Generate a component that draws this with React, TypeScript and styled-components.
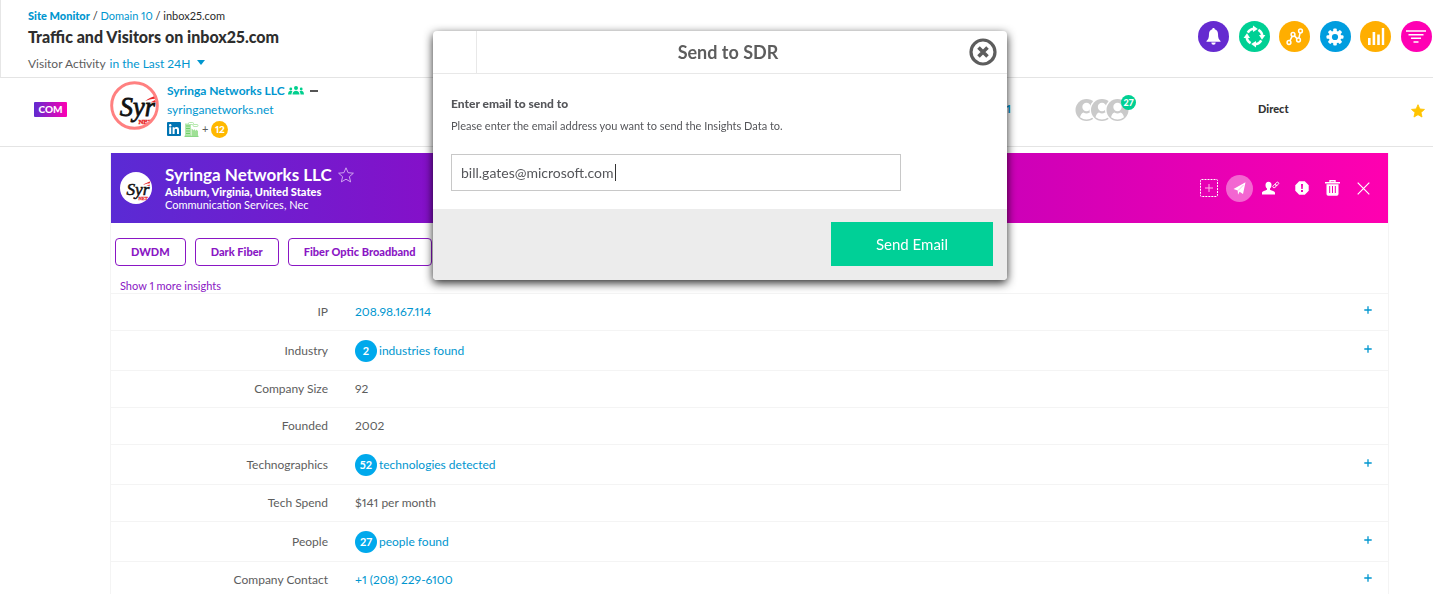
import React, { useState } from "react";
import styled, { createGlobalStyle } from "styled-components";

const blue = "#0096cf";
const grey = "#5d5d5d";
const purple = "#8a16c4";

const GlobalStyle = createGlobalStyle`
  *, *::before, *::after { box-sizing: border-box; }
  body {
    margin: 0;
    background: #fff;
    color: ${grey};
    font: 12px/16px Lato, "Open Sans", sans-serif;
    font-variant-numeric: proportional-nums;
  }
  a { color: ${blue}; text-decoration: none; }
  button { font: inherit; font-variant-numeric: inherit; cursor: pointer; }
  h1, h2, h3, p { margin: 0; }
  svg { display: block; flex: none; }
`;

const Page = styled.div`
  height: 100vh;
  overflow: hidden;
`;

/* ---------- page header ---------- */

const Header = styled.header`
  display: flex;
  justify-content: space-between;
  height: 78px;
  padding: 8px 1px 0 27px;
  border-left: 1px solid #e6e6e6;
  border-bottom: 1px solid #e4e4e4;
`;

const Crumbs = styled.nav`
  color: #2b2b2b;
  font-size: 11px;
`;

const SectionLink = styled.a`
  font-weight: 900;
`;

const Title = styled.h1`
  margin-top: 3px;
  color: #2e2e2e;
  font-size: 16px;
  font-weight: 900;
  line-height: 20px;
`;

const Activity = styled.div`
  display: flex;
  align-items: center;
  gap: 4px;
  margin-top: 9px;
  font-size: 12px;
`;

const PeriodButton = styled.button`
  display: flex;
  align-items: center;
  gap: 7px;
  padding: 0;
  border: 0;
  background: none;
  color: ${blue};
`;

const Toolbar = styled.div`
  display: flex;
  justify-content: space-between;
  width: 234px;
  margin-top: 13px;
`;

const RoundButton = styled.button<{ $color: string }>`
  display: grid;
  place-items: center;
  width: 31px;
  height: 31px;
  padding: 0;
  border: 0;
  border-radius: 50%;
  background: ${(p) => p.$color};
`;

/* ---------- visitor row ---------- */

const VisitorRow = styled.section`
  display: grid;
  grid-template-columns: 110px 1fr 69px 183px 152px 23px;
  height: 69px;
  border-bottom: 1px solid #e4e4e4;
`;

const Cell = styled.div`
  padding-top: 23px;
`;

const TypeBadge = styled.span`
  display: block;
  width: 33px;
  height: 15px;
  margin: 1px 0 0 34px;
  background: linear-gradient(90deg, #5f2bd0, #ff00b3);
  border-radius: 1px;
  color: #fff;
  font-size: 10px;
  font-weight: 900;
  line-height: 15px;
  text-align: center;
`;

const Company = styled.div`
  display: flex;
  gap: 8px;
  padding-top: 3px;
`;

const CompanyLine = styled.div`
  display: flex;
  align-items: center;
  gap: 3px;
  height: 18px;
  margin-top: 1px;
`;

const Count = styled.span`
  display: grid;
  place-items: center;
  width: 17px;
  height: 17px;
  border-radius: 50%;
  background: #ffb800;
  color: #fff;
  font-size: 10px;
  font-weight: 900;
`;

const Plus = styled.span`
  font-size: 11px;
`;

const People = styled.div`
  position: relative;
  width: 55px;
  margin-top: -3px;
`;

const PeopleCount = styled.span`
  position: absolute;
  top: -3px;
  right: -6px;
  width: 15px;
  height: 15px;
  border-radius: 50%;
  background: #00d093;
  color: #fff;
  font-size: 9px;
  font-weight: 900;
  line-height: 15px;
  text-align: center;
`;

const Source = styled.strong`
  color: #333;
  font-size: 11px;
  font-weight: 900;
`;

const IconButton = styled.button<{ $filled?: boolean }>`
  display: grid;
  place-items: center;
  width: 27px;
  height: 27px;
  padding: 0;
  border: 0;
  border-radius: 50%;
  background: ${(p) => (p.$filled ? "rgba(255,255,255,.4)" : "none")};
  color: #fff;
`;

const StarButton = styled(IconButton)`
  width: 15px;
  height: 20px;
`;

/* ---------- details panel ---------- */

const Panel = styled.section`
  margin: 6px 44px 0 110px;
  border: solid #f4f4f4;
  border-width: 0 1px;
`;

const PanelHead = styled.header`
  display: flex;
  align-items: center;
  height: 70px;
  padding: 0 11px 0 9px;
  background: linear-gradient(90deg, #5a2bd4, #8510c9 25%, #cc00b8 70%, #ff00b0);
  color: #fff;
`;

const PanelText = styled.div`
  flex: 1;
  margin-left: 13px;
  font-size: 11px;
  line-height: 13px;
`;

const PanelName = styled.h2`
  display: flex;
  align-items: center;
  gap: 6px;
  font-size: 17px;
  line-height: 20px;
`;

const Place = styled.p`
  font-weight: 900;
`;

const Actions = styled.div`
  display: flex;
  gap: 4px;
`;

const Tags = styled.div`
  display: flex;
  gap: 9px;
  padding: 15px 4px 0;
`;

const Tag = styled.button`
  height: 28px;
  padding: 0 15px;
  border: 1px solid ${purple};
  border-radius: 4px;
  background: #fff;
  color: ${purple};
  font-size: 11px;
  font-weight: 900;
`;

const MoreButton = styled.button`
  display: block;
  height: 27px;
  padding: 13px 9px 0;
  border: 0;
  background: none;
  color: ${purple};
  font-size: 11px;
  line-height: 14px;
`;

const Facts = styled.table`
  width: 100%;
  border-collapse: collapse;
  table-layout: fixed;
`;

const FactRow = styled.tr<{ $tall?: boolean }>`
  height: ${(p) => (p.$tall ? 40 : 37)}px;
  border-top: 1px solid #f4f4f4;
`;

const FactLabel = styled.th`
  width: 217px;
  padding: 0;
  font-weight: 400;
  text-align: right;
`;

const FactValue = styled.td`
  padding: 0 0 0 27px;
`;

const FactMore = styled.td`
  width: 28px;
  padding: 0 0 4px;
`;

const FoundLink = styled.a`
  display: inline-flex;
  align-items: center;
  gap: 2px;
`;

const FoundCount = styled.span`
  display: grid;
  place-items: center;
  width: 22px;
  height: 22px;
  border-radius: 50%;
  background: #00a9ec;
  color: #fff;
  font-size: 11px;
  font-weight: 700;
`;

const ExpandButton = styled.button`
  display: block;
  padding: 4px;
  border: 0;
  background: none;
  color: ${blue};
`;

/* ---------- dialog ---------- */

const Overlay = styled.div`
  position: fixed;
  inset: 0;
  display: flex;
  align-items: flex-start;
  justify-content: center;
  padding: 31px 0 0 7px;
`;

const Dialog = styled.form`
  width: 574px;
  border-radius: 4px;
  overflow: hidden;
  background: #fff;
  box-shadow: 0 3px 10px rgba(0, 0, 0, 0.85);
`;

const DialogHead = styled.header`
  display: grid;
  grid-template-columns: 44px 1fr 38px;
  align-items: center;
  height: 43px;
  border-bottom: 1px solid #e8e8e8;
`;

const HeadSlot = styled.span`
  height: 42px;
  border-right: 1px solid #e8e8e8;
`;

const DialogTitle = styled.h2`
  padding-left: 10px;
  font-size: 18px;
  line-height: 24px;
  text-align: center;
`;

const CloseButton = styled.button`
  padding: 0;
  border: 0;
  background: none;
  color: ${grey};
`;

const DialogBody = styled.div`
  padding: 22px 18px 18px;
`;

const FieldLabel = styled.label`
  display: block;
  font-size: 12px;
  font-weight: 900;
  color: #55565a;
`;

const Hint = styled.p`
  margin-top: 7px;
  color: #55565a;
  font-size: 11px;
  line-height: 14px;
`;

const Field = styled.div`
  position: relative;
  width: 450px;
  margin-top: 21px;
`;

const EmailInput = styled.input`
  width: 100%;
  height: 37px;
  padding: 0 9px;
  border: 1px solid #c8c8c8;
  outline: 0;
  background: #fff;
  color: #55565a;
  font: 14px Lato, "Open Sans", sans-serif;
`;

const Caret = styled.span`
  position: absolute;
  top: 10px;
  left: 164px;
  width: 1px;
  height: 17px;
  background: #333;
`;

const DialogFoot = styled.footer`
  display: flex;
  justify-content: flex-end;
  padding: 13px 14px 14px;
  background: #ececec;
`;

const SendButton = styled.button`
  width: 162px;
  height: 44px;
  border: 0;
  background: #00d097;
  color: #fff;
  font-size: 15px;
`;

/* ---------- drawings ---------- */

const SyringaLogo = ({ size, ring }: { size: number; ring?: boolean }) => (
  <svg width={size} height={size} viewBox="0 0 50 50" role="img" aria-label="Syringa Networks logo">
    <clipPath id={`logo${size}`}><circle cx="25" cy="25" r={ring ? 23 : 25} /></clipPath>
    <circle cx="25" cy="25" r={ring ? 23 : 25} fill="#fff" />
    <g clipPath={`url(#logo${size})`}>
      <text x="10" y="36" fontFamily="Liberation Serif, serif" fontStyle="italic" fontSize="27" fill="#111" stroke="#111" strokeWidth=".8">Syr</text>
      <path d="M36 20.500c3-3 7-4 12-6l-2 3.500c-4 0-7 1-10 2.500zM41 22l5-2.500 1 2z" fill="#e8282b" />
      <text x="29" y="44" fontFamily="Liberation Serif, serif" fontWeight="700" fontSize="7" fill="#e8282b" stroke="#e8282b" strokeWidth=".4">NET</text>
    </g>
    {ring && <circle cx="25" cy="25" r="23.3" fill="none" stroke="#ff8080" strokeWidth="3" />}
  </svg>
);

const BellIcon = () => (
  <svg width="15" height="17" viewBox="0 0 15 17" fill="#fff">
    <path d="M7.500 0c.8 0 1.200.5 1.200 1.200C11 1.800 12 3.800 12 6c0 4 .8 5.500 2.500 7v.8H.5V13C2.200 11.500 3 10 3 6c0-2.200 1-4.200 3.300-4.800C6.300.5 6.700 0 7.500 0zM5.300 14.600h4.400a2.200 2.200 0 0 1-4.400 0z" />
  </svg>
);

const CycleIcon = () => (
  <svg width="23" height="23" viewBox="0 0 23 23">
    <g fill="none" stroke="#fff" strokeWidth="2.600">
      {[0, 90, 180, 270].map((a) => (
        <path key={a} d="M4.800 7.600A7.800 7.800 0 0 1 11.500 3.700" transform={`rotate(${a} 11.500 11.500)`} />
      ))}
    </g>
    {[0, 90, 180, 270].map((a) => (
      <path key={a} d="M10 .6 14.800 4 10 7z" fill="#fff" transform={`rotate(${a} 11.500 11.500)`} />
    ))}
  </svg>
);

const NodesIcon = () => (
  <svg width="18" height="18" viewBox="0 0 18 18" fill="none" stroke="#fff" strokeWidth="1.500">
    <circle cx="3" cy="14.500" r="1.900" /><circle cx="7" cy="6.500" r="1.900" />
    <circle cx="12.500" cy="12" r="1.900" /><circle cx="14.500" cy="3" r="1.900" />
    <path d="m3.900 12.800 2.200-4.500M8.400 7.900l2.700 2.700M12.900 10.100l1.200-5.200" />
  </svg>
);

const GearIcon = () => (
  <svg width="18" height="18" viewBox="0 0 18 18">
    {[0, 45, 90, 135].map((a) => (
      <rect key={a} x="7.200" y=".5" width="3.600" height="17" rx="1" fill="#fff" transform={`rotate(${a} 9 9)`} />
    ))}
    <circle cx="9" cy="9" r="6.300" fill="#fff" />
    <circle cx="9" cy="9" r="3.100" fill="#009ddf" />
  </svg>
);

const BarsIcon = () => (
  <svg width="18" height="17" viewBox="0 0 18 17" fill="#fff">
    <path d="M1 10h2.600v7H1zM5.600 4h2.600v13H5.600zM10.200 6.500h2.600V17h-2.600zM14.800 0h2.400v17h-2.400z" />
  </svg>
);

const FilterIcon = () => (
  <svg width="20" height="13" viewBox="0 0 20 13" stroke="#fff" strokeWidth="1.400">
    <path d="M0 1h20M2.500 4.700h15M5 8.300h10M7.500 12h5" />
  </svg>
);

const GroupIcon = () => (
  <svg width="16" height="10" viewBox="0 0 16 10" fill="#00cf8e">
    <circle cx="8" cy="2" r="2" /><circle cx="2.800" cy="3" r="1.400" /><circle cx="13.200" cy="3" r="1.400" />
    <path d="M4.500 8.500c0-5 7-5 7 0zM0 8.500C0 4 3.500 4.300 4.500 5.200 3.800 6.200 3.500 7 3.500 8.500zM16 8.500c0-4.500-3.500-4.200-4.500-3.300.7 1 1 1.800 1 3.300z" />
  </svg>
);

const LinkedInIcon = () => (
  <svg width="14" height="14" viewBox="0 0 14 14">
    <rect width="14" height="14" rx="1" fill="#0073b2" />
    <path d="M2.200 5.300h2V12h-2zM5.600 5.300h1.900v.9c.4-.7 1.200-1.100 2.100-1.100 1.900 0 2.400 1.200 2.400 3V12h-2V8.500c0-.9-.1-1.700-1.100-1.700S7.600 7.600 7.600 8.500V12h-2z" fill="#fff" />
    <circle cx="3.200" cy="3.200" r="1.200" fill="#fff" />
  </svg>
);

const OfficeIcon = () => (
  <svg width="15" height="15" viewBox="0 0 15 15">
    <path d="M1 1.500h6V14H1z" fill="#b5e8ae" />
    <path d="M.5 14.300h14M2 4h4M2 6.500h4M2 9h4M2 11.500h4" stroke="#6fcf68" fill="none" />
    <path d="M7.500 14V6.500l2.500 2v-1.500l2 2V7.500l2 1.500V14z" fill="#9fe096" />
    <rect x="4.500" y=".5" width="5" height="2" rx="1" fill="#fff" stroke="#a4e39c" strokeWidth=".8" />
    <rect x="9" y="2.500" width="5" height="2" rx="1" fill="#fff" stroke="#a4e39c" strokeWidth=".8" />
  </svg>
);

const AvatarsIcon = () => (
  <svg width="55" height="24" viewBox="0 0 55 24">
    {[11.500, 27, 42.500].map((x) => (
      <g key={x}>
        <circle cx={x} cy="12" r="12.500" fill="#fff" />
        <circle cx={x} cy="12" r="11" fill="#cacaca" />
        <circle cx={x} cy="9" r="4.200" fill="#fff" />
        <path d={`M${x - 6.500} 19.300q1-4.300 3.500-4.800 3 2 6 0 2.500.5 3.500 4.800-6.500 4.500-13 0z`} fill="#fff" />
      </g>
    ))}
  </svg>
);

const STAR = "M8 .8l2.100 4.900 5.300.5-4 3.500 1.200 5.200L8 12.200l-4.600 2.700 1.200-5.200-4-3.500 5.300-.5z";

const StarIcon = ({ size, filled }: { size: number; filled?: boolean }) => (
  <svg width={size} height={size} viewBox="0 0 16 16">
    <path d={STAR} fill={filled ? "#ffc400" : "none"} stroke={filled ? "#ffc400" : "#d8b4f2"} strokeWidth={filled ? 1 : 0.9} />
  </svg>
);

const AddBoxIcon = () => (
  <svg width="18" height="18" viewBox="0 0 18 18" fill="none" stroke="#fff">
    <rect x=".5" y=".5" width="17" height="17" rx="1" strokeDasharray="2 1" />
    <path d="M9 5v8M5 9h8" stroke="#ffb5e8" />
  </svg>
);

const PlaneIcon = () => (
  <svg width="13" height="13" viewBox="0 0 13 13" fill="#fff">
    <path d="M12.500.3 10 12 6.600 9.700 5 12.700 4.700 8.600.5 7z" />
    <path d="M10.500 3 5 8.600" stroke="#f7a0df" strokeWidth=".7" />
  </svg>
);

const PersonLinkIcon = () => (
  <svg width="18" height="14" viewBox="0 0 18 14">
    <path d="M6.500.7c2 0 3 1.400 3 3.300 0 1.700-.7 2.900-1.500 3.600v1.200c2 1 5 1.400 5 3.200v1.500H0V12c0-1.800 3-2.200 5-3.200V7.600C4.200 6.900 3.500 5.700 3.500 4c0-1.900 1-3.300 3-3.300z" fill="#fff" />
    <g fill="none" stroke="#fff" strokeWidth=".9">
      <rect x="10.700" y="3.900" width="4" height="2.400" rx="1.200" transform="rotate(-40 12.600 5.100)" />
      <rect x="12.900" y="1.700" width="4" height="2.400" rx="1.200" transform="rotate(-40 14.900 2.900)" />
    </g>
  </svg>
);

const AlertIcon = () => (
  <svg width="14" height="14" viewBox="0 0 14 14">
    <path d="M4.200.3h5.600L13.700 4.200v5.600L9.800 13.700H4.200L.3 9.800V4.200z" fill="#fff" />
    <path d="M6 3h2l-.3 5H6.300zM6 9h2v2H6z" fill="#f000b4" />
  </svg>
);

const TrashIcon = () => (
  <svg width="15" height="16" viewBox="0 0 15 16">
    <path d="M5 2V.7h5V2M0 2.700h15" fill="none" stroke="#fff" strokeWidth="1.400" />
    <path d="M1.500 4.200h12V14q0 1.700-1.700 1.700H3.200Q1.500 15.700 1.500 14z" fill="#fff" />
    <path d="M4.700 6v7M7.500 6v7M10.300 6v7" stroke="#f600b3" />
  </svg>
);

const CrossIcon = () => (
  <svg width="13" height="13" viewBox="0 0 13 13" stroke="#fff" strokeWidth="1.200">
    <path d="m.7.7 11.600 11.600M12.300.7.7 12.300" />
  </svg>
);

const CloseIcon = () => (
  <svg width="28" height="28" viewBox="0 0 28 28" fill="none" stroke="currentColor">
    <circle cx="14" cy="14" r="12" strokeWidth="3.200" />
    <path d="m9.500 9.500 9 9M18.500 9.500l-9 9" strokeWidth="3.600" />
  </svg>
);

const PlusIcon = () => (
  <svg width="8" height="8" viewBox="0 0 8 8" stroke="currentColor" strokeWidth="1.300">
    <path d="M4 .3v7.400M.3 4h7.400" />
  </svg>
);

/* ---------- data ---------- */

const tools = [
  { name: "Notifications", color: "#652bd0", icon: <BellIcon /> },
  { name: "Refresh", color: "#00d094", icon: <CycleIcon /> },
  { name: "Paths", color: "#ffae00", icon: <NodesIcon /> },
  { name: "Settings", color: "#009ddf", icon: <GearIcon /> },
  { name: "Reports", color: "#ffae00", icon: <BarsIcon /> },
  { name: "Filter", color: "#ff00b3", icon: <FilterIcon /> },
];

const actions = [
  { name: "Add", icon: <AddBoxIcon /> },
  { name: "Send", icon: <PlaneIcon />, filled: true },
  { name: "Link person", icon: <PersonLinkIcon /> },
  { name: "Report", icon: <AlertIcon /> },
  { name: "Delete", icon: <TrashIcon /> },
  { name: "Close panel", icon: <CrossIcon /> },
];

type Fact = { label: string; value: string; count?: number; link?: boolean };

const facts: Fact[] = [
  { label: "IP", value: "208.98.167.114", link: true },
  { label: "Industry", value: "industries found", count: 2, link: true },
  { label: "Company Size", value: "92" },
  { label: "Founded", value: "2002" },
  { label: "Technographics", value: "technologies detected", count: 52, link: true },
  { label: "Tech Spend", value: "$141 per month" },
  { label: "People", value: "people found", count: 27, link: true },
  { label: "Company Contact", value: "+1 (208) 229-6100", link: true },
];

export default function App() {
  const [email, setEmail] = useState("bill.gates@microsoft.com");

  return (
    <Page>
      <GlobalStyle />
      <Header>
        <div>
          <Crumbs>
            <SectionLink href="#monitor">Site Monitor</SectionLink> / <a href="#domain">Domain 10</a> / inbox25.com
          </Crumbs>
          <Title>Traffic and Visitors on inbox25.com</Title>
          <Activity>
            Visitor Activity
            <PeriodButton>
              in the Last 24H
              <svg width="8" height="8" viewBox="0 0 8 8"><path d="M0 0h8L4 5z" fill={blue} /></svg>
            </PeriodButton>
          </Activity>
        </div>
        <Toolbar>
          {tools.map((t) => (
            <RoundButton key={t.name} $color={t.color} aria-label={t.name}>{t.icon}</RoundButton>
          ))}
        </Toolbar>
      </Header>

      <VisitorRow>
        <Cell><TypeBadge>COM</TypeBadge></Cell>
        <Company>
          <SyringaLogo size={49} ring />
          <div>
            <CompanyLine>
              <a href="#company"><b>Syringa Networks LLC</b></a>
              <GroupIcon />
              <svg width="14" height="8" viewBox="0 0 14 8"><path d="M3 4h8" stroke="#555" strokeWidth="2" /></svg>
            </CompanyLine>
            <CompanyLine><a href="#site">syringanetworks.net</a></CompanyLine>
            <CompanyLine>
              <LinkedInIcon /><OfficeIcon /><Plus>+</Plus><Count>12</Count>
            </CompanyLine>
          </div>
        </Company>
        <Cell><a href="#visits"><b>1</b></a></Cell>
        <Cell>
          <People><AvatarsIcon /><PeopleCount>27</PeopleCount></People>
        </Cell>
        <Cell><Source>Direct</Source></Cell>
        <Cell><StarButton aria-label="Favourite"><StarIcon size={14} filled /></StarButton></Cell>
      </VisitorRow>

      <Panel>
        <PanelHead>
          <SyringaLogo size={32} />
          <PanelText>
            <PanelName>Syringa Networks LLC <StarIcon size={16} /></PanelName>
            <Place>Ashburn, Virginia, United States</Place>
            <p>Communication Services, Nec</p>
          </PanelText>
          <Actions>
            {actions.map((a) => (
              <IconButton key={a.name} $filled={a.filled} aria-label={a.name}>{a.icon}</IconButton>
            ))}
          </Actions>
        </PanelHead>
        <Tags>
          {["DWDM", "Dark Fiber", "Fiber Optic Broadband"].map((t) => <Tag key={t}>{t}</Tag>)}
        </Tags>
        <MoreButton>Show 1 more insights</MoreButton>
        <Facts>
          <tbody>
            {facts.map((f) => (
              <FactRow key={f.label} $tall={f.count !== undefined}>
                <FactLabel scope="row">{f.label}</FactLabel>
                <FactValue>
                  {f.link ? (
                    <FoundLink href="#detail">
                      {f.count !== undefined && <FoundCount>{f.count}</FoundCount>}
                      {f.value}
                    </FoundLink>
                  ) : f.value}
                </FactValue>
                <FactMore>
                  {f.link && <ExpandButton aria-label={`Expand ${f.label}`}><PlusIcon /></ExpandButton>}
                </FactMore>
              </FactRow>
            ))}
          </tbody>
        </Facts>
      </Panel>

      <Overlay>
        <Dialog role="dialog" aria-labelledby="dialog-title" onSubmit={(e) => e.preventDefault()}>
          <DialogHead>
            <HeadSlot />
            <DialogTitle id="dialog-title">Send to SDR</DialogTitle>
            <CloseButton type="button" aria-label="Close"><CloseIcon /></CloseButton>
          </DialogHead>
          <DialogBody>
            <FieldLabel htmlFor="email">Enter email to send to</FieldLabel>
            <Hint>Please enter the email address you want to send the Insights Data to.</Hint>
            <Field>
              <EmailInput id="email" type="email" value={email} onChange={(e) => setEmail(e.target.value)} />
              <Caret />
            </Field>
          </DialogBody>
          <DialogFoot><SendButton>Send Email</SendButton></DialogFoot>
        </Dialog>
      </Overlay>
    </Page>
  );
}
